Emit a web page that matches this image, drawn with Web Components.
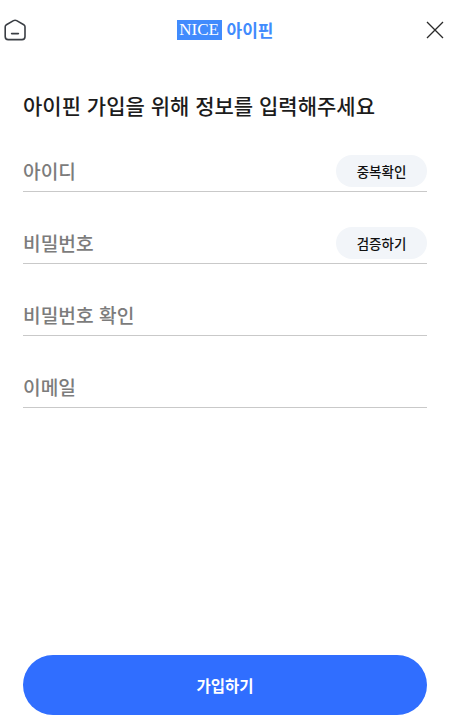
<!DOCTYPE html>
<html lang="ko">
<head>
<meta charset="utf-8">
<style>
    html, body { margin: 0; height: 100%; background: #fff; }
    body { font-family: "Noto Sans CJK KR", "Noto Sans", sans-serif; }
</style>
</head>
<body>
<join-page>
    <join-header slot="header"></join-header>
    <span slot="title">아이핀 가입을 위해 정보를 입력해주세요</span>
    <join-field label="아이디" action="중복확인"></join-field>
    <join-field label="비밀번호" action="검증하기"></join-field>
    <join-field label="비밀번호 확인"></join-field>
    <join-field label="이메일"></join-field>
    <span slot="submit">가입하기</span>
</join-page>

<script>
const pageTemplate = document.createElement('template');
pageTemplate.innerHTML = /*html*/`
    <style>
        :host {
            display: flex;
            flex-direction: column;
            height: 728px;
            box-sizing: border-box;
            padding-bottom: 13px;
        }
        .title {
            margin: 30px 23px 0;
            height: 30px;
            line-height: 30px;
            font-size: 21px;
            font-weight: 500;
            color: #1c1c1c;
        }
        .fields {
            display: flex;
            flex-direction: column;
            gap: 24px;
            margin: 24px 26px 0 23px;
        }
        .submit {
            margin: auto 26px 0 23px;
            height: 60px;
            border: 0;
            border-radius: 30px;
            padding: 0;
            background: #306eff;
            color: #fff;
            font: 700 15.5px "Noto Sans CJK KR", sans-serif;
        }
    </style>
    <slot name="header"></slot>
    <div class="title"><slot name="title"></slot></div>
    <div class="fields"><slot></slot></div>
    <button class="submit"><slot name="submit"></slot></button>
`;

class JoinPage extends HTMLElement {
    constructor(){
        super();
        this.attachShadow({ mode: 'open' });
        this.shadowRoot.appendChild(pageTemplate.content.cloneNode(true));
    }
}

const headerTemplate = document.createElement('template');
headerTemplate.innerHTML = /*html*/`
    <style>
        :host {
            display: flex;
            justify-content: space-between;
            align-items: center;
            height: 60px;
            padding: 0 9px 0 3px;
        }
        svg { display: block; }
        .logo {
            display: flex;
            align-items: center;
            gap: 5px;
            margin-right: 3px;
        }
        .nice {
            width: 45px;
            height: 20px;
            background: #418bfd;
            color: #fff;
            font: 17px/20px "Liberation Serif", serif;
            text-align: center;
        }
        .ipin {
            font-size: 17px;
            line-height: 20px;
            font-weight: 700;
            color: #418bfd;
        }
    </style>
    <svg width="24" height="24" viewBox="0 0 24 24" fill="none" stroke="#3a3e44" stroke-width="1.6">
        <path d="M10.5 2.6 L3.4 6.8 Q2.2 7.5 2.2 8.8 V18.4 Q2.2 21.6 5.2 21.6 H19 Q22 21.6 22 18.4 V8.8 Q22 7.5 20.8 6.8 L13.7 2.6 Q12.1 1.8 10.5 2.6 Z"/>
        <path d="M8.6 15.6 H15.4" stroke-linecap="round"/>
    </svg>
    <div class="logo">
        <span class="nice">NICE</span>
        <span class="ipin">아이핀</span>
    </div>
    <svg width="18" height="18" viewBox="0 0 18 18" fill="none" stroke="#2a2a2a" stroke-width="1.3">
        <path d="M1 1 L17 17 M17 1 L1 17"/>
    </svg>
`;

class JoinHeader extends HTMLElement {
    constructor(){
        super();
        this.attachShadow({ mode: 'open' });
        this.shadowRoot.appendChild(headerTemplate.content.cloneNode(true));
    }
}

const fieldTemplate = document.createElement('template');
fieldTemplate.innerHTML = /*html*/`
    <style>
        :host {
            display: flex;
            justify-content: space-between;
            align-items: flex-end;
            height: 48px;
            box-sizing: border-box;
            border-bottom: 1px solid #c9c9c9;
            padding-bottom: 4px;
        }
        .label {
            font-size: 19.2px;
            line-height: 32px;
            font-weight: 500;
            color: #7c7c7c;
        }
        .action {
            width: 91px;
            height: 32px;
            border: 0;
            border-radius: 16px;
            padding: 0;
            background: #f2f5f9;
            color: #111;
            font: 500 13.5px "Noto Sans CJK KR", sans-serif;
        }
    </style>
    <span class="label"></span>
    <button class="action"></button>
`;

class JoinField extends HTMLElement {
    constructor(){
        super();
        this.attachShadow({ mode: 'open' });
        this.shadowRoot.appendChild(fieldTemplate.content.cloneNode(true));
        this.shadowRoot.querySelector('.label').innerText = this.getAttribute('label');
        const button = this.shadowRoot.querySelector('.action');
        if (this.hasAttribute('action')) {
            button.innerText = this.getAttribute('action');
        } else {
            button.remove();
        }
    }
}

window.customElements.define('join-page', JoinPage);
window.customElements.define('join-header', JoinHeader);
window.customElements.define('join-field', JoinField);
</script>
</body>
</html>
